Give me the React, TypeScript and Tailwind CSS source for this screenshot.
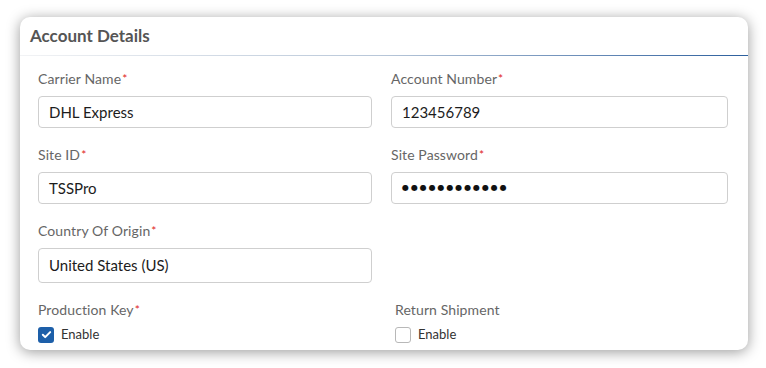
import React from 'react';

const font = { fontFamily: 'Lato, "Open Sans", sans-serif' };

function Label({ text, required }: { text: string; required?: boolean }) {
  return (
    <p className="text-[14px] leading-5 tracking-[0.1px] text-[#666]">
      {text}
      {required && <span className="text-[#e02424] text-[12px] align-top ml-[1px]">*</span>}
    </p>
  );
}

function Field({ label, value, tall, secret }: { label: string; value: string; tall?: boolean; secret?: boolean }) {
  return (
    <div>
      <Label text={label} required />
      <div
        className={`mt-[7px] flex items-center rounded-[4px] border border-[#cfcfcf] bg-white px-[10px] ${tall ? 'h-[35px]' : 'h-[32px]'}`}
      >
        {secret ? (
          <span className="text-[8px] tracking-[1.9px] text-[#111]" style={{ fontFamily: '"DejaVu Sans", sans-serif' }}>
            ●●●●●●●●●●●●
          </span>
        ) : (
          <span className="text-[15px] text-[#1c1c1c]">{value}</span>
        )}
      </div>
    </div>
  );
}

function Check({ label, title, checked, required }: { label: string; title: string; checked?: boolean; required?: boolean }) {
  return (
    <div>
      <Label text={title} required={required} />
      <div className="mt-[5px] flex items-center gap-[7px]">
        {checked ? (
          <span className="flex h-4 w-4 items-center justify-center rounded-[3px] bg-[#1d5fa9]">
            <svg width="11" height="11" viewBox="0 0 12 12" fill="none">
              <path d="M2 6.3l2.6 2.6L10 3.4" stroke="#fff" strokeWidth="2.2" strokeLinecap="round" strokeLinejoin="round" />
            </svg>
          </span>
        ) : (
          <span className="h-4 w-4 rounded-[3px] border border-[#b8b8b8] bg-white" />
        )}
        <span className="text-[13px] text-[#333]">{label}</span>
      </div>
    </div>
  );
}

export default function App() {
  return (
    <div className="h-[368px] w-[766px] bg-white pl-[20px] pt-[17px]" style={font}>
      <div className="h-[333px] w-[728px] rounded-[10px] bg-white shadow-[0_2px_14px_rgba(0,0,0,0.4)]">
        {/* header */}
        <div className="flex h-[38px] items-center pl-[10px]">
          <h2 className="text-[17px] font-bold text-[#555]">Account Details</h2>
        </div>
        <div className="h-px bg-gradient-to-r from-[#f2f3f5] via-[#b7c6d8] to-[#2c5f9d]" />

        {/* form */}
        <div className="grid grid-cols-[334px_337px] gap-x-[19px] gap-y-[17px] px-[18px] pt-[13px]">
          <Field label="Carrier Name" value="DHL Express" />
          <Field label="Account Number" value="123456789" />
          <Field label="Site ID" value="TSSPro" />
          <Field label="Site Password" value="" secret />
          <Field label="Country Of Origin" value="United States (US)" tall />
          <div />
          <Check title="Production Key" label="Enable" checked required />
          <div className="pl-[4px]">
            <Check title="Return Shipment" label="Enable" />
          </div>
        </div>
      </div>
    </div>
  );
}
